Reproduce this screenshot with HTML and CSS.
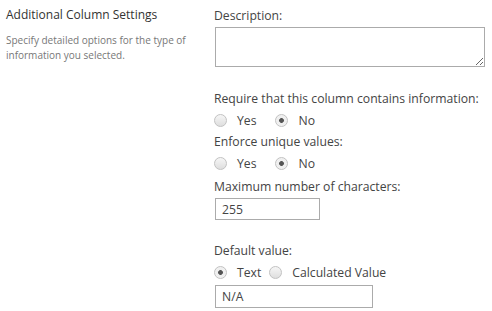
FILE: index.html
```html
<!DOCTYPE html>
<html lang="en">
<head>
    <meta charset="UTF-8">
    <title>Additional Column Settings</title>
    <link rel="stylesheet" href="styles.css">
</head>
<body>
    <div class="settings">
        <section class="settings-info">
            <h3>Additional Column Settings</h3>
            <p>Specify detailed options for the type of information you selected.</p>
        </section>

        <section class="settings-form">
            <label class="field-label" for="desc">Description:</label>
            <textarea id="desc" class="desc-box"></textarea>

            <div class="field-label gap-lg">Require that this column contains information:</div>
            <div class="radio-row">
                <label class="opt"><input type="radio" name="req"> Yes</label>
                <label class="opt"><input type="radio" name="req" checked> No</label>
            </div>

            <div class="field-label">Enforce unique values:</div>
            <div class="radio-row">
                <label class="opt"><input type="radio" name="uniq"> Yes</label>
                <label class="opt"><input type="radio" name="uniq" checked> No</label>
            </div>

            <label class="field-label gap-xs" for="maxlen">Maximum number of characters:</label>
            <input type="text" id="maxlen" class="text-box short" value="255">

            <div class="field-label gap-md">Default value:</div>
            <div class="radio-row tight">
                <label class="opt"><input type="radio" name="def" checked> Text</label>
                <label class="opt"><input type="radio" name="def"> Calculated Value</label>
            </div>
            <input type="text" class="text-box wide" value="N/A">
        </section>
    </div>
</body>
</html>
```

FILE: styles.css
```css
body {
    margin: 0;
    background: #fff;
    font-family: "Open Sans", "Liberation Sans", sans-serif;
    color: #444;
}
.settings {
    display: flex;
    padding-top: 6px;
}
.settings-info {
    width: 208px;
    padding-left: 6px;
}
.settings-info h3 {
    margin: 0;
    font-size: 12px;
    font-weight: normal;
    line-height: 18px;
    color: #333;
}
.settings-info p {
    margin: 9px 0 0;
    width: 190px;
    font-size: 10px;
    line-height: 15px;
    color: #777;
}
.settings-form {
    display: flex;
    flex-direction: column;
    align-items: flex-start;
}
.field-label {
    font-size: 12.2px;
    line-height: 20px;
    color: #444;
}
.gap-lg {
    margin-top: 22px;
}
.gap-md {
    margin-top: 21px;
}
.gap-xs {
    margin-top: 2px;
}
.desc-box {
    display: block;
    margin: 1px 0 0 1px;
    width: 270px;
    height: 40px;
    box-sizing: border-box;
    padding: 2px;
    border: 1px solid #ababab;
    resize: both;
    font-family: inherit;
}
.radio-row {
    display: flex;
    gap: 19px;
    height: 22px;
    margin-bottom: 1px;
    align-items: center;
}
.radio-row.tight {
    gap: 8px;
    margin-bottom: 1px;
}
.opt {
    display: flex;
    align-items: center;
    gap: 10px;
    font-size: 12.2px;
    color: #444;
}
.opt input {
    appearance: none;
    margin: 0;
    width: 13px;
    height: 13px;
    border: 1px solid #c2c2c2;
    border-radius: 50%;
    background: linear-gradient(#f6f6f6, #dedede);
    box-sizing: border-box;
}
.opt input:checked {
    background: radial-gradient(circle, #555 0, #555 2px, #eee 2.8px, #f4f4f4 100%);
}
.text-box {
    display: block;
    margin: 1px 0 0 1px;
    height: 22px;
    box-sizing: border-box;
    padding: 0 6px;
    border: 1px solid #ababab;
    font-family: inherit;
    font-size: 12.2px;
    color: #444;
}
.short {
    width: 105px;
}
.wide {
    width: 158px;
    height: 23px;
}
```
